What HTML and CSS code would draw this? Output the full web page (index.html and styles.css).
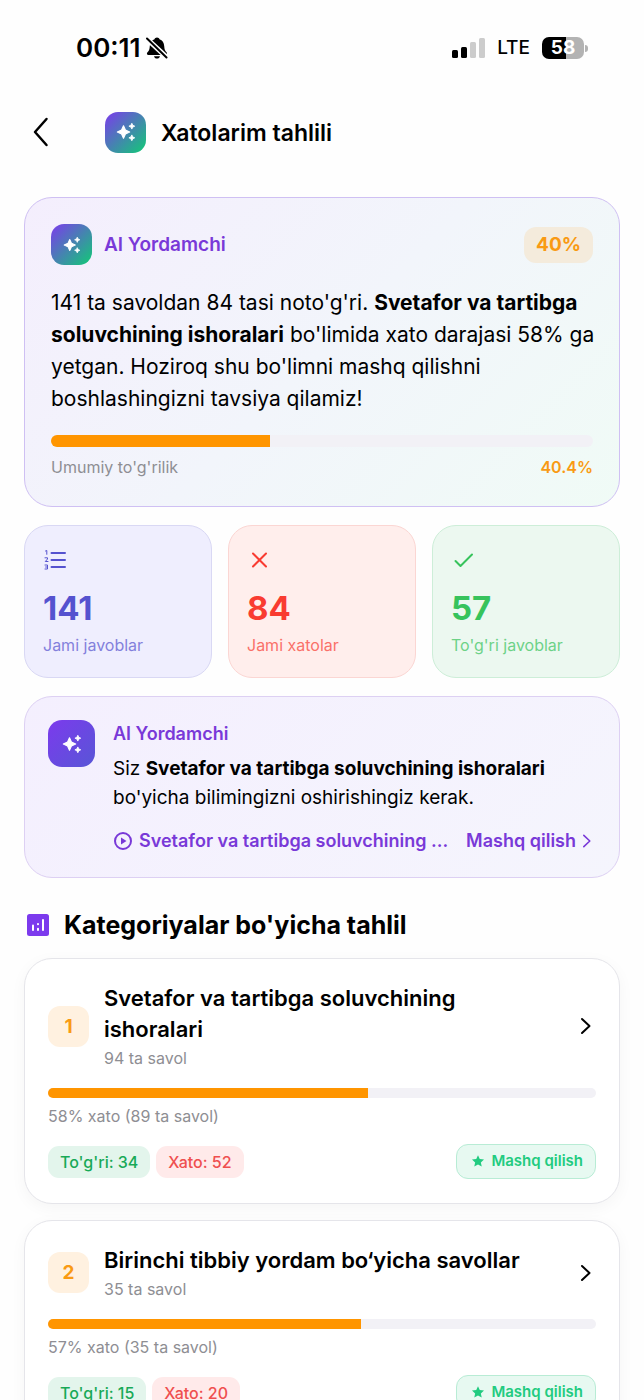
FILE: index.html
```html
<!DOCTYPE html>
<html lang="uz">
<head>
<meta charset="utf-8">
<meta name="viewport" content="width=device-width, initial-scale=1">
<title>Xatolarim tahlili</title>
<link rel="stylesheet" href="styles.css">
</head>
<body>
<svg class="defs" width="0" height="0" aria-hidden="true">
  <symbol id="sparkles" viewBox="0 0 24 24">
    <path d="M9 4.6 11.3 9.7 16.4 12 11.3 14.3 9 19.4 6.7 14.3 1.600 12 6.700 9.700Z" stroke-width="1.400"/>
    <path d="M19 1.500 20.100 3.900 22.500 5 20.100 6.100 19 8.500 17.900 6.100 15.500 5 17.900 3.900Z"/>
    <path d="M19 15.500 20.100 17.900 22.500 19 20.100 20.100 19 22.500 17.900 20.100 15.500 19 17.900 17.900Z"/>
  </symbol>
  <symbol id="chevron" viewBox="0 0 12 20">
    <path d="M2 3 9.500 10 2 17"/>
  </symbol>
  <symbol id="star" viewBox="0 0 24 24">
    <path d="M12 2 15 8.700 22.300 9.500 16.900 14.400 18.400 21.600 12 18 5.600 21.600 7.100 14.400 1.700 9.500 9 8.700Z"/>
  </symbol>
</svg>

<div class="screen">
  <div class="status">
    <div class="status-side">
      <span class="clock">00:11</span>
      <svg class="bell" viewBox="0 0 22 22" aria-hidden="true">
        <path d="M11 .500c1.300 0 2.200.8 2.500 1.800 3 1 4.500 3.500 4.700 6.700.2 3.500.8 4.700 2.500 6.600.8 1 .3 2.400-1 2.400H2.300c-1.300 0-1.800-1.400-1-2.400 1.700-1.900 2.300-3.100 2.500-6.600.2-3.200 1.700-5.700 4.700-6.700C8.800 1.300 9.700.5 11 .5ZM8 19.200h6c-.4 1.500-1.500 2.300-3 2.300s-2.600-.8-3-2.300Z"/>
        <path class="bell-gap" d="M.5 1.500 21 20.500"/>
        <path class="bell-slash" d="M1 1.500 20.500 20.500"/>
      </svg>
    </div>
    <div class="status-side status-right">
      <svg class="signal" viewBox="0 0 33 22" aria-hidden="true">
        <rect x="0" y="13" width="6" height="8" rx="1.500"/>
        <rect x="9" y="10" width="6" height="11" rx="1.500"/>
        <rect class="dim" x="18" y="5" width="6" height="16" rx="1.500"/>
        <rect class="dim" x="27" y="1" width="6" height="20" rx="1.500"/>
      </svg>
      <span class="network">LTE</span>
      <span class="battery"><span class="battery-body">58</span><span class="battery-tip"></span></span>
    </div>
  </div>

  <header class="topbar">
    <button class="back" type="button" aria-label="Orqaga">
      <svg viewBox="0 0 16 30" aria-hidden="true"><path d="M13.500 2 2 15 13.500 28"/></svg>
    </button>
    <span class="ai-icon"><svg><use href="#sparkles"/></svg></span>
    <h1>Xatolarim tahlili</h1>
  </header>

  <main class="content">
    <section class="card summary">
      <div class="summary-head">
        <span class="ai-icon small"><svg><use href="#sparkles"/></svg></span>
        <h2 class="ai-name">AI Yordamchi</h2>
        <span class="score">40%</span>
      </div>
      <p class="summary-text">141 ta savoldan 84 tasi noto'g'ri. <b>Svetafor va tartibga soluvchining ishoralari</b> bo'limida xato darajasi 58% ga yetgan. Hoziroq shu bo'limni mashq qilishni boshlashingizni tavsiya qilamiz!</p>
      <div class="bar tall"><div class="fill" style="width:40.4%"></div></div>
      <div class="summary-foot"><span>Umumiy to'g'rilik</span><span class="rate">40.4%</span></div>
    </section>

    <section class="stats">
      <div class="card stat total">
        <svg viewBox="0 0 24 24" aria-hidden="true">
          <path d="M8.500 5H22M8.500 12H22M8.500 19H22"/>
          <path class="thin" d="M2.500 3 3.800 2.500V6.300M2 9.800H4.500V11L2.300 13.500H5M2 17H4.500V21H2M2.600 19H4.500"/>
        </svg>
        <strong>141</strong><span>Jami javoblar</span>
      </div>
      <div class="card stat wrong">
        <svg viewBox="0 0 24 24" aria-hidden="true"><path d="M6 5.500 19 18.500M19 5.500 6 18.500"/></svg>
        <strong>84</strong><span>Jami xatolar</span>
      </div>
      <div class="card stat right">
        <svg viewBox="0 0 24 24" aria-hidden="true"><path d="M4.500 13 9.500 18 21 6.500"/></svg>
        <strong>57</strong><span>To'g'ri javoblar</span>
      </div>
    </section>

    <section class="card advice">
      <span class="ai-icon violet"><svg><use href="#sparkles"/></svg></span>
      <div class="advice-body">
        <h2 class="ai-name">AI Yordamchi</h2>
        <p>Siz <b>Svetafor va tartibga soluvchining ishoralari</b> bo'yicha bilimingizni oshirishingiz kerak.</p>
        <a class="advice-link" href="#mashq">
          <svg class="play" viewBox="0 0 20 20" aria-hidden="true"><circle cx="10" cy="10" r="8"/><path d="M8 6.500 13.500 10 8 13.500Z"/></svg>
          <span class="topic">Svetafor va tartibga soluvchining ...</span>
          <span>Mashq qilish</span>
          <svg class="chevron"><use href="#chevron"/></svg>
        </a>
      </div>
    </section>

    <div class="section-title">
      <svg viewBox="0 0 24 24" aria-hidden="true">
        <rect x="1" y="1" width="22" height="22" rx="2.500"/>
        <path d="M7 12.500V17M12 15.800V17M12 11V11.200M17 7V17"/>
      </svg>
      <h2>Kategoriyalar bo'yicha tahlil</h2>
    </div>

    <article class="card category">
      <a class="category-head" href="#k1">
        <span class="rank">1</span>
        <span class="category-name"><strong>Svetafor va tartibga soluvchining ishoralari</strong><small>94 ta savol</small></span>
        <svg class="chevron"><use href="#chevron"/></svg>
      </a>
      <div class="bar"><div class="fill" style="width:58.4%"></div></div>
      <p class="detail">58% xato (89 ta savol)</p>
      <div class="category-foot">
        <span class="pill good">To'g'ri: 34</span>
        <span class="pill bad">Xato: 52</span>
        <button class="practice" type="button"><svg><use href="#star"/></svg>Mashq qilish</button>
      </div>
    </article>

    <article class="card category">
      <a class="category-head" href="#k2">
        <span class="rank">2</span>
        <span class="category-name"><strong>Birinchi tibbiy yordam bo‘yicha savollar</strong><small>35 ta savol</small></span>
        <svg class="chevron"><use href="#chevron"/></svg>
      </a>
      <div class="bar"><div class="fill" style="width:57.1%"></div></div>
      <p class="detail">57% xato (35 ta savol)</p>
      <div class="category-foot">
        <span class="pill good">To'g'ri: 15</span>
        <span class="pill bad">Xato: 20</span>
        <button class="practice" type="button"><svg><use href="#star"/></svg>Mashq qilish</button>
      </div>
    </article>
  </main>
</div>
</body>
</html>
```
FILE: styles.css
```css
* { box-sizing: border-box; }

body {
  margin: 0;
  background: #fefefe;
  color: #000;
  font-family: Inter, "Liberation Sans", sans-serif;
}

h1, h2, p { margin: 0; }
a { color: inherit; text-decoration: none; }
button { font: inherit; color: inherit; cursor: pointer; }
svg { flex: none; fill: none; }
.defs { position: absolute; }

.screen {
  display: flex;
  flex-direction: column;
  height: 100vh;
  overflow-y: auto;
  scrollbar-width: none;
}

/* Status bar */
.status {
  display: flex;
  flex: none;
  align-items: center;
  justify-content: space-between;
  height: 96px;
  padding: 0 56px 0 76px;
}
.status-side { display: flex; align-items: center; gap: 5px; }
.clock { font-size: 26px; font-weight: 600; line-height: 32px; }
.bell { width: 22px; height: 22px; fill: #000; }
.bell-gap { stroke: #fefefe; stroke-width: 5; }
.bell-slash { stroke: #000; stroke-width: 2; stroke-linecap: round; }
.status-right { gap: 12px; }
.signal { width: 33px; height: 22px; fill: #000; }
.signal .dim { fill: #ccc; }
.network { font-size: 19px; font-weight: 500; line-height: 24px; }
.battery { display: flex; align-items: center; gap: 1px; }
.battery-body {
  width: 42px;
  height: 22px;
  border-radius: 7px;
  background: linear-gradient(90deg, #000 58%, #b3b3b3 58%);
  color: #fff;
  font-size: 19px;
  font-weight: 700;
  line-height: 22px;
  text-align: center;
}
.battery-tip { width: 3px; height: 7px; border-radius: 0 4px 4px 0; background: #b3b3b3; }

/* Top bar */
.topbar {
  display: flex;
  flex: none;
  align-items: center;
  height: 72px;
  padding: 0 24px 0 33px;
}
.back {
  display: flex;
  width: 72px;
  padding: 0;
  border: 0;
  background: none;
}
.back svg {
  width: 16px;
  height: 30px;
  stroke: #000;
  stroke-width: 2.500;
  stroke-linecap: round;
  stroke-linejoin: round;
}
.topbar h1 { margin-left: 15px; padding-top: 2px; font-size: 23px; font-weight: 600; line-height: 32px; }

.ai-icon {
  display: flex;
  flex: none;
  align-items: center;
  justify-content: center;
  width: 41px;
  height: 41px;
  border-radius: 13px;
  background: linear-gradient(135deg, #7c3aed, #10cb75);
}
.ai-icon svg {
  width: 20px;
  height: 20px;
  fill: #fff;
  stroke: #fff;
  stroke-width: 1;
  stroke-linejoin: round;
}
.ai-icon.small svg { width: 18px; height: 18px; }
.ai-icon.violet {
  width: 47px;
  height: 47px;
  border-radius: 14px;
  background: linear-gradient(135deg, #7c3aed, #5856d6);
}

/* Cards */
.content { display: flex; flex-direction: column; padding: 29px 24px 24px; }
.card { border: 1px solid; border-radius: 28px; }
.ai-name { color: #7939d8; font-size: 19px; font-weight: 600; line-height: 24px; }

.bar { height: 10px; border-radius: 5px; background: #f2f1f6; overflow: hidden; }
.bar.tall { height: 12px; border-radius: 6px; }
.fill { height: 100%; background: #ff9500; }

.summary {
  padding: 26px 26px 27px;
  border-color: #cfc0f3;
  background: linear-gradient(135deg, #f4eefd, #f2f5fb 50%, #f0fbf6);
}
.summary-head { display: flex; align-items: center; gap: 12px; }
.score {
  margin-left: auto;
  padding: 6px 12px;
  border-radius: 12px;
  background: #f4ebdc;
  color: #f99a13;
  font-size: 19px;
  font-weight: 700;
  line-height: 24px;
}
.summary-text { margin: 22px -8px 20px 0; font-size: 21px; line-height: 32px; }
.summary-foot {
  display: flex;
  justify-content: space-between;
  margin-top: 8px;
  color: #8e8e93;
  font-size: 16px;
  line-height: 24px;
}
.rate { color: #f99a13; font-weight: 600; }

.stats {
  display: grid;
  grid-template-columns: repeat(3, 1fr);
  gap: 16px;
  margin: 18px 0;
}
.stat { display: flex; flex-direction: column; padding: 22px 18px; border-radius: 24px; }
.stat svg {
  width: 24px;
  height: 24px;
  stroke: currentColor;
  stroke-width: 2;
  stroke-linecap: round;
  stroke-linejoin: round;
}
.stat .thin { stroke-width: 1; }
.stat strong { margin: 16px 0 7px; font-size: 33px; font-weight: 700; line-height: 40px; }
.stat span { font-size: 16px; line-height: 20px; opacity: .7; }
.total { border-color: #d9d8f4; background: #efeefe; color: #5552cf; }
.wrong { border-color: #fbd6d3; background: #ffeeec; color: #f93b31; }
.right { border-color: #cdeed8; background: #ecf8f0; color: #37c35c; }

.advice {
  display: flex;
  gap: 18px;
  padding: 23px 27px 24px 23px;
  border-color: #ddd0f3;
  background: linear-gradient(135deg, #f4effe, #f5f5fd);
}
.advice-body { flex: 1; min-width: 0; padding-top: 2px; }
.advice .ai-name { font-size: 18px; }
.advice p { margin: 8px 0 17px; font-size: 19px; line-height: 29px; }
.advice-link {
  display: flex;
  align-items: center;
  color: #7939d8;
  font-size: 18px;
  font-weight: 600;
  line-height: 24px;
  white-space: nowrap;
}
.play { width: 20px; height: 20px; margin-right: 6px; stroke: currentColor; stroke-width: 2; }
.play path { fill: currentColor; stroke: none; }
.topic { flex: 1; min-width: 0; overflow: hidden; text-overflow: ellipsis; }
.chevron {
  width: 12px;
  height: 20px;
  stroke: currentColor;
  stroke-width: 2;
  stroke-linecap: round;
  stroke-linejoin: round;
}
.advice-link .chevron { width: 10px; height: 16px; margin-left: 6px; }

.section-title { display: flex; align-items: center; gap: 14px; margin: 31px 0 17px 2px; }
.section-title svg { width: 24px; height: 24px; }
.section-title rect { fill: #7c3aed; }
.section-title path { stroke: #fff; stroke-width: 2; stroke-linecap: round; }
.section-title h2 { font-size: 25px; font-weight: 700; line-height: 32px; }

.category {
  margin-bottom: 16px;
  padding: 24px 23px;
  border-color: #e5e5ea;
  background: #fff;
  box-shadow: 0 4px 16px rgba(0, 0, 0, .04);
}
.category-head { display: flex; align-items: center; }
.rank {
  flex: none;
  width: 41px;
  height: 41px;
  border-radius: 12px;
  background: #fff1e0;
  color: #f99a13;
  font-size: 19px;
  font-weight: 700;
  line-height: 41px;
  text-align: center;
}
.category-name { flex: 1; min-width: 0; padding: 0 48px 0 15px; }
.category-name strong { display: block; font-size: 22px; font-weight: 600; line-height: 31px; }
.category-name small { display: block; margin-top: 2px; color: #8e8e93; font-size: 16px; line-height: 22px; }
.category-head .chevron { margin-right: 4px; }
.category .bar { margin-top: 19px; }
.detail { margin: 8px 0 18px; color: #8e8e93; font-size: 16px; line-height: 20px; }
.category-foot { display: flex; align-items: center; gap: 6px; }
.pill { padding: 6px 12px; border-radius: 11px; font-size: 16px; font-weight: 500; line-height: 20px; }
.good { background: #e3f5ec; color: #18a957; }
.bad { background: #ffeaea; color: #ef4f4f; }
.practice {
  display: flex;
  align-items: center;
  gap: 6px;
  margin-left: auto;
  padding: 6px 12px 7px 14px;
  border: 1px solid #b8ecd5;
  border-radius: 12px;
  background: #e7f9f1;
  color: #22cb80;
  font-size: 15px;
  font-weight: 600;
  line-height: 20px;
}
.practice svg { width: 14px; height: 14px; fill: currentColor; }
```
